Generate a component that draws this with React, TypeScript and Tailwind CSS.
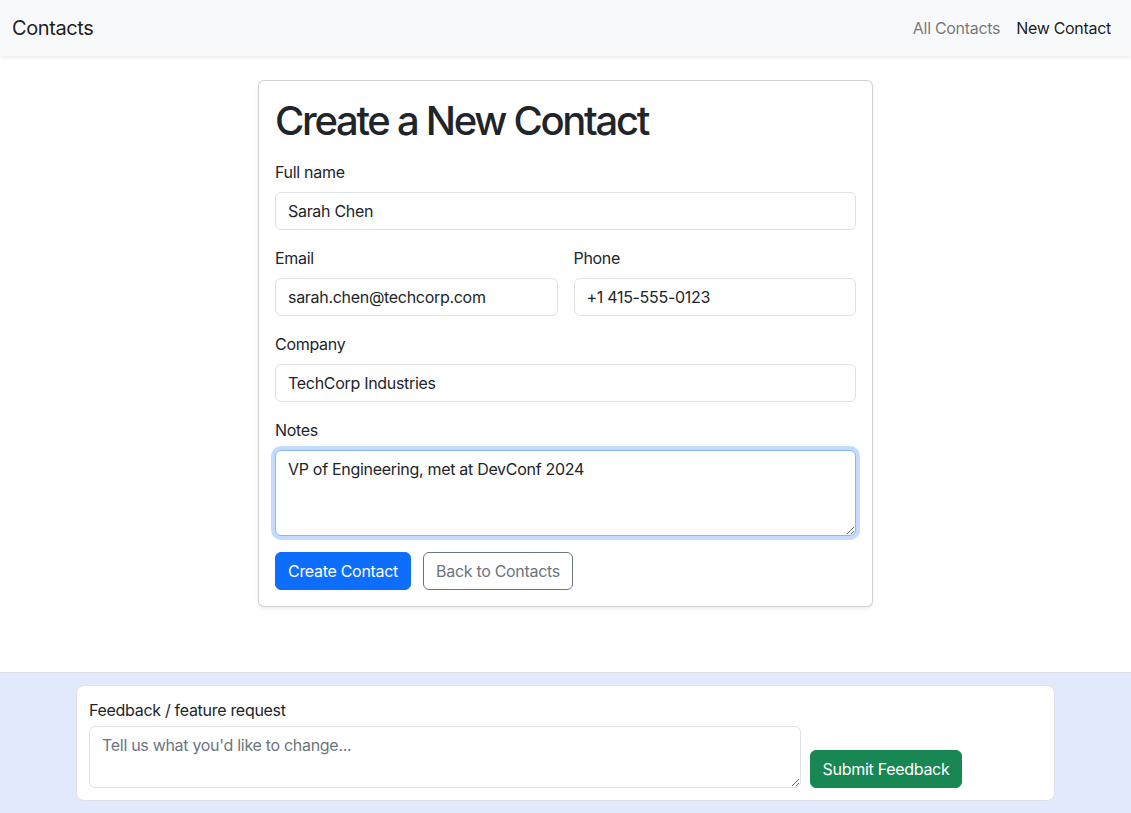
import React from "react";

export default function App() {
  const inputCls =
    "block w-full h-[38px] px-3 py-[6px] text-[16px] leading-6 text-[#212529] bg-white border border-[#dee2e6] rounded-[6px] outline-none";
  const labelCls = "block mb-2 text-[16px] leading-6 text-[#212529]";
  return (
    <div
      className="h-screen flex flex-col bg-white text-[#212529] tracking-[-0.3px]"
      style={{ fontFamily: "Inter, 'Noto Sans', 'Liberation Sans', sans-serif" }}
    >
      <nav className="h-[56px] shrink-0 bg-[#f8f9fa] shadow-[0_2px_4px_rgba(0,0,0,0.075)] flex items-center justify-between px-3 relative z-10">
        <span className="text-[20px] leading-[30px] text-black/90 tracking-[-0.4px]">Contacts</span>
        <div className="flex items-center">
          <a className="px-2 text-[16px] leading-6 text-black/55">All Contacts</a>
          <a className="px-2 text-[16px] leading-6 text-black/90">New Contact</a>
        </div>
      </nav>

      <main className="flex-1 flex justify-center pt-6">
        <div className="w-[615px] self-start bg-white border border-black/[0.175] rounded-[6px] shadow-[0_2px_4px_rgba(0,0,0,0.075)] p-4">
          <h1 className="text-[40px] leading-[48px] font-medium tracking-[-2.3px] mb-[15px]">Create a New Contact</h1>
          <div className="mb-4">
            <label className={labelCls}>Full name</label>
            <input className={inputCls} defaultValue="Sarah Chen" />
          </div>
          <div className="grid grid-cols-2 gap-4 mb-4">
            <div>
              <label className={labelCls}>Email</label>
              <input className={inputCls} defaultValue="sarah.chen@techcorp.com" />
            </div>
            <div>
              <label className={labelCls}>Phone</label>
              <input className={inputCls} defaultValue="+1 415-555-0123" />
            </div>
          </div>
          <div className="mb-4">
            <label className={labelCls}>Company</label>
            <input className={inputCls} defaultValue="TechCorp Industries" />
          </div>
          <div className="mb-4">
            <label className={labelCls}>Notes</label>
            <textarea
              rows={3}
              className="block w-full h-[86px] px-3 py-[6px] text-[16px] leading-6 text-[#212529] bg-white border border-[#86b7fe] rounded-[6px] outline-none shadow-[0_0_0_4px_rgba(13,110,253,0.25)]"
              defaultValue="VP of Engineering, met at DevConf 2024"
            />
          </div>
          <div className="flex gap-3">
            <button className="h-[38px] px-3 rounded-[6px] bg-[#0d6efd] text-white text-[16px] leading-6 border border-[#0d6efd]">
              Create Contact
            </button>
            <button className="h-[38px] px-3 rounded-[6px] bg-white text-[#6c757d] text-[16px] leading-6 border border-[#6c757d]">
              Back to Contacts
            </button>
          </div>
        </div>
      </main>

      <footer className="h-[141px] shrink-0 bg-[#e0eafc] border-t border-[#dee2e6] pt-3">
        <div className="w-[979px] mx-auto bg-white border border-[#dee2e6] rounded-[8px] p-3 flex items-end gap-[9px]">
          <div className="flex-1">
            <label className="block mb-1 text-[16px] leading-6 text-[#212529]">Feedback / feature request</label>
            <textarea
              rows={2}
              placeholder="Tell us what you'd like to change..."
              className="block w-full h-[62px] px-3 py-[6px] text-[16px] leading-6 text-[#212529] placeholder:text-[#6c757d] bg-white border border-[#dee2e6] rounded-[6px] outline-none"
            />
          </div>
          <button className="w-[152px] h-[38px] rounded-[6px] bg-[#198754] text-white text-[16px] leading-6 border border-[#198754] shrink-0 mr-[80px]">
            Submit Feedback
          </button>
        </div>
      </footer>
    </div>
  );
}
